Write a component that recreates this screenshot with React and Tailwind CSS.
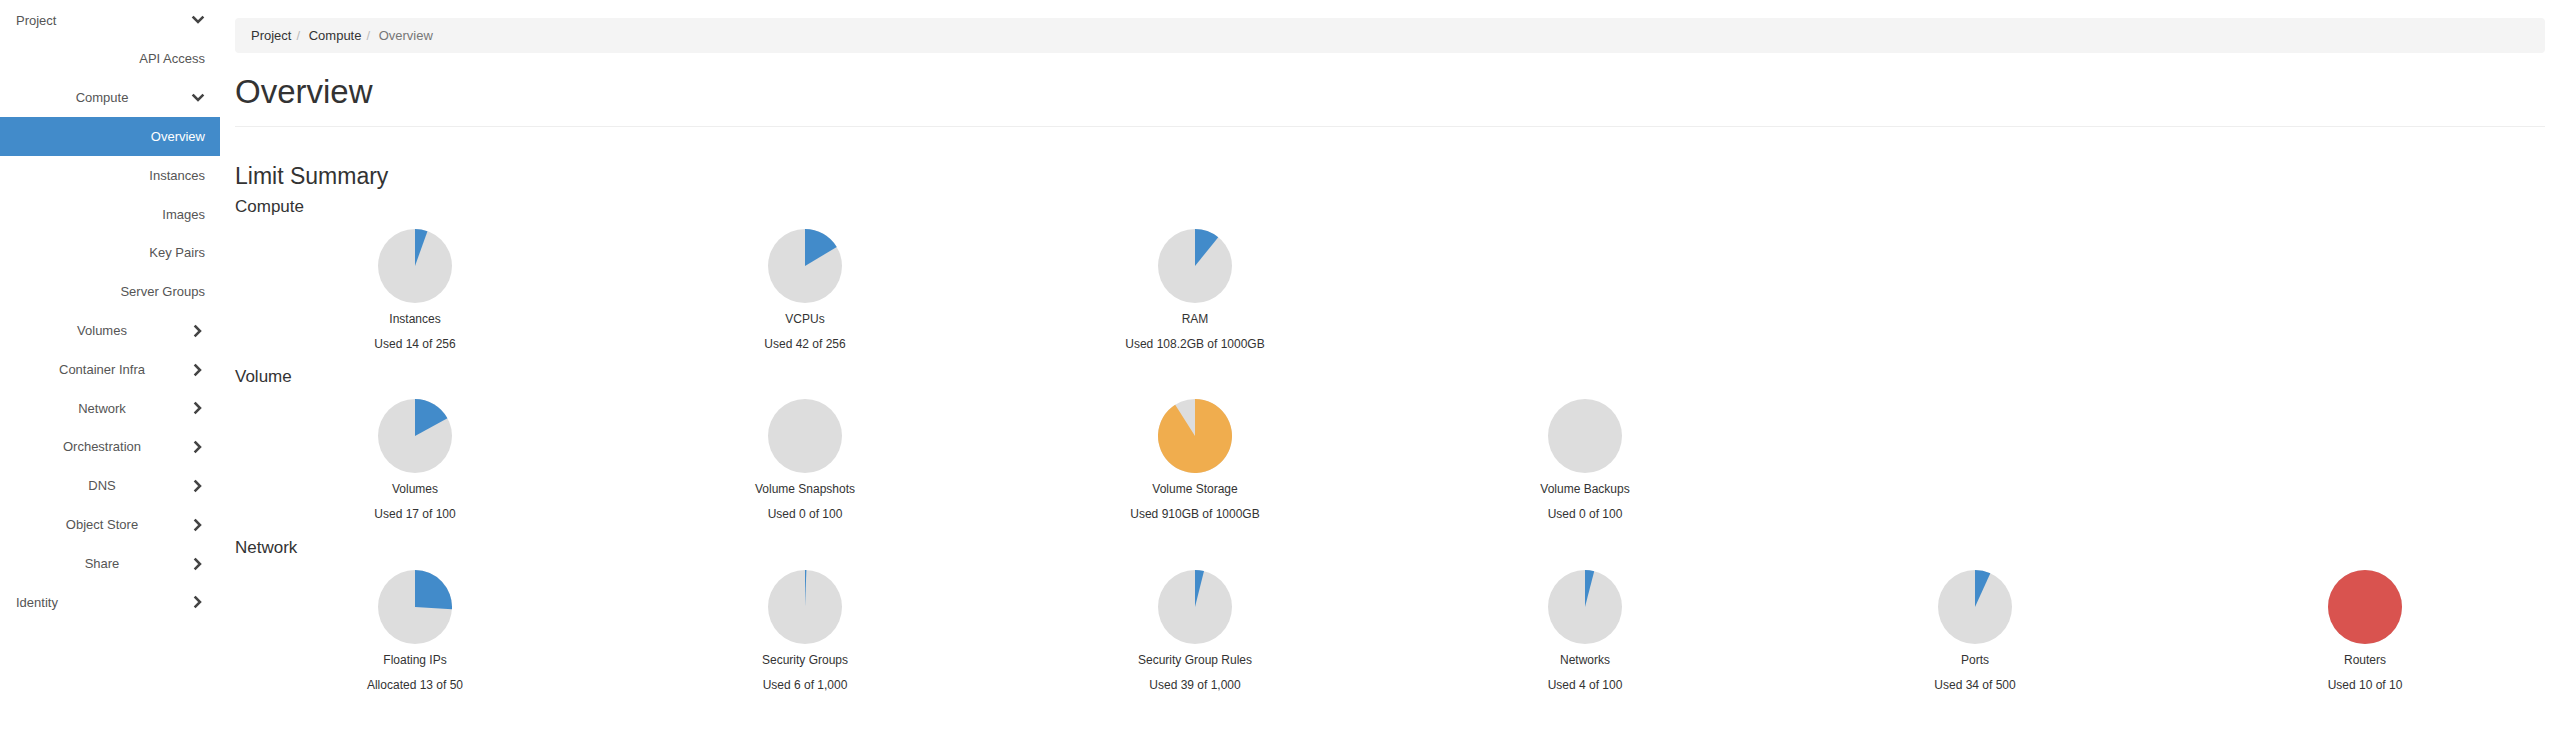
import React from 'react';

const FONT = { fontFamily: '"Liberation Sans", Arial, Helvetica, sans-serif' };

const navItems = [
  { label: 'Project', kind: 'top', chevron: 'down' },
  { label: 'API Access', kind: 'panel' },
  { label: 'Compute', kind: 'group', chevron: 'down' },
  { label: 'Overview', kind: 'panel', active: true },
  { label: 'Instances', kind: 'panel' },
  { label: 'Images', kind: 'panel' },
  { label: 'Key Pairs', kind: 'panel' },
  { label: 'Server Groups', kind: 'panel' },
  { label: 'Volumes', kind: 'group', chevron: 'right' },
  { label: 'Container Infra', kind: 'group', chevron: 'right' },
  { label: 'Network', kind: 'group', chevron: 'right' },
  { label: 'Orchestration', kind: 'group', chevron: 'right' },
  { label: 'DNS', kind: 'group', chevron: 'right' },
  { label: 'Object Store', kind: 'group', chevron: 'right' },
  { label: 'Share', kind: 'group', chevron: 'right' },
  { label: 'Identity', kind: 'top', chevron: 'right' },
];

const sections = [
  {
    title: 'Compute',
    charts: [
      { name: 'Instances', used: 14, total: 256, text: 'Used 14 of 256' },
      { name: 'VCPUs', used: 42, total: 256, text: 'Used 42 of 256' },
      { name: 'RAM', used: 108.2, total: 1000, text: 'Used 108.2GB of 1000GB' },
    ],
  },
  {
    title: 'Volume',
    charts: [
      { name: 'Volumes', used: 17, total: 100, text: 'Used 17 of 100' },
      { name: 'Volume Snapshots', used: 0, total: 100, text: 'Used 0 of 100' },
      { name: 'Volume Storage', used: 910, total: 1000, text: 'Used 910GB of 1000GB' },
      { name: 'Volume Backups', used: 0, total: 100, text: 'Used 0 of 100' },
    ],
  },
  {
    title: 'Network',
    charts: [
      { name: 'Floating IPs', used: 13, total: 50, text: 'Allocated 13 of 50' },
      { name: 'Security Groups', used: 6, total: 1000, text: 'Used 6 of 1,000' },
      { name: 'Security Group Rules', used: 39, total: 1000, text: 'Used 39 of 1,000' },
      { name: 'Networks', used: 4, total: 100, text: 'Used 4 of 100' },
      { name: 'Ports', used: 34, total: 500, text: 'Used 34 of 500' },
      { name: 'Routers', used: 10, total: 10, text: 'Used 10 of 10' },
    ],
  },
];

function Chevron({ dir }) {
  return (
    <svg width="14" height="14" viewBox="0 0 14 14" className="shrink-0">
      {dir === 'down' ? (
        <polyline points="2.5,4.5 7,9 11.5,4.5" fill="none" stroke="#444" strokeWidth="2.5" strokeLinecap="square" />
      ) : (
        <polyline points="4.5,2.5 9,7 4.5,11.5" fill="none" stroke="#444" strokeWidth="2.5" strokeLinecap="square" />
      )}
    </svg>
  );
}

function Pie({ used, total }) {
  const r = 37;
  const c = 37;
  const frac = total ? used / total : 0;
  const color = frac >= 1 ? '#d9534f' : frac > 0.8 ? '#f0ad4e' : '#428bca';
  let slice = null;
  if (frac >= 1) {
    slice = <circle cx={c} cy={c} r={r} fill={color} />;
  } else if (frac > 0) {
    const a = frac * 2 * Math.PI;
    const x = c + r * Math.sin(a);
    const y = c - r * Math.cos(a);
    const large = frac > 0.5 ? 1 : 0;
    slice = <path d={`M${c},${c} L${c},${c - r} A${r},${r} 0 ${large} 1 ${x},${y} Z`} fill={color} />;
  }
  return (
    <svg width="74" height="74" viewBox="0 0 74 74">
      <circle cx={c} cy={c} r={r} fill="#dddddd" />
      {slice}
    </svg>
  );
}

function Sidebar() {
  return (
    <div className="w-[220px] shrink-0 bg-white text-[13px] pt-[1px]">
      {navItems.map((item) => {
        if (item.kind === 'top') {
          return (
            <div key={item.label} className="h-[38.8px] flex items-center pl-[16px] pr-[15px] text-[#555]">
              <span className="flex-1">{item.label}</span>
              <Chevron dir={item.chevron} />
            </div>
          );
        }
        if (item.kind === 'group') {
          return (
            <div key={item.label} className="h-[38.8px] flex items-center pr-[15px] text-[#555]">
              <span className="flex-1 pl-[13px] text-center">{item.label}</span>
              <Chevron dir={item.chevron} />
            </div>
          );
        }
        return (
          <div
            key={item.label}
            className={`h-[38.8px] flex items-center justify-end pr-[15px] ${
              item.active ? 'bg-[#428bca] text-white' : 'text-[#555]'
            }`}
          >
            {item.label}
          </div>
        );
      })}
    </div>
  );
}

export default function App() {
  return (
    <div className="flex min-h-[730px] bg-white text-[#333]" style={FONT}>
      <Sidebar />
      <div className="flex-1 min-w-0 pl-[15px] pr-[9px] pt-[18px]">
        {/* Breadcrumb */}
        <div className="h-[35px] flex items-center px-[16px] bg-[#f4f4f4] rounded-[4px] text-[13px]">
          <span className="text-[#333]">Project</span>
          <span className="text-[#bbb] px-[5px]">/&nbsp;</span>
          <span className="text-[#333]">Compute</span>
          <span className="text-[#bbb] px-[5px]">/&nbsp;</span>
          <span className="text-[#777]">Overview</span>
        </div>

        <h1 className="mt-[21px] text-[33px] leading-[36px] text-[#333]">Overview</h1>
        <div className="mt-[16px] border-t border-[#eee]" />

        <h2 className="mt-[36px] text-[23px] leading-[26px] text-[#333]">Limit Summary</h2>

        <div className="mt-[7.5px]">
          {sections.map((s) => (
            <div key={s.title} className="mb-[14.5px]">
              <h3 className="text-[17px] leading-[20px] text-[#333]">{s.title}</h3>
              <div className="mt-[12px] -mx-[15px] grid grid-cols-6">
                {s.charts.map((ch) => (
                  <div key={ch.name} className="flex flex-col items-center text-[12px] text-[#333]">
                    <Pie used={ch.used} total={ch.total} />
                    <div className="mt-[8px] leading-[17px]">{ch.name}</div>
                    <div className="mt-[8px] leading-[17px]">{ch.text}</div>
                  </div>
                ))}
              </div>
            </div>
          ))}
        </div>
      </div>
    </div>
  );
}
